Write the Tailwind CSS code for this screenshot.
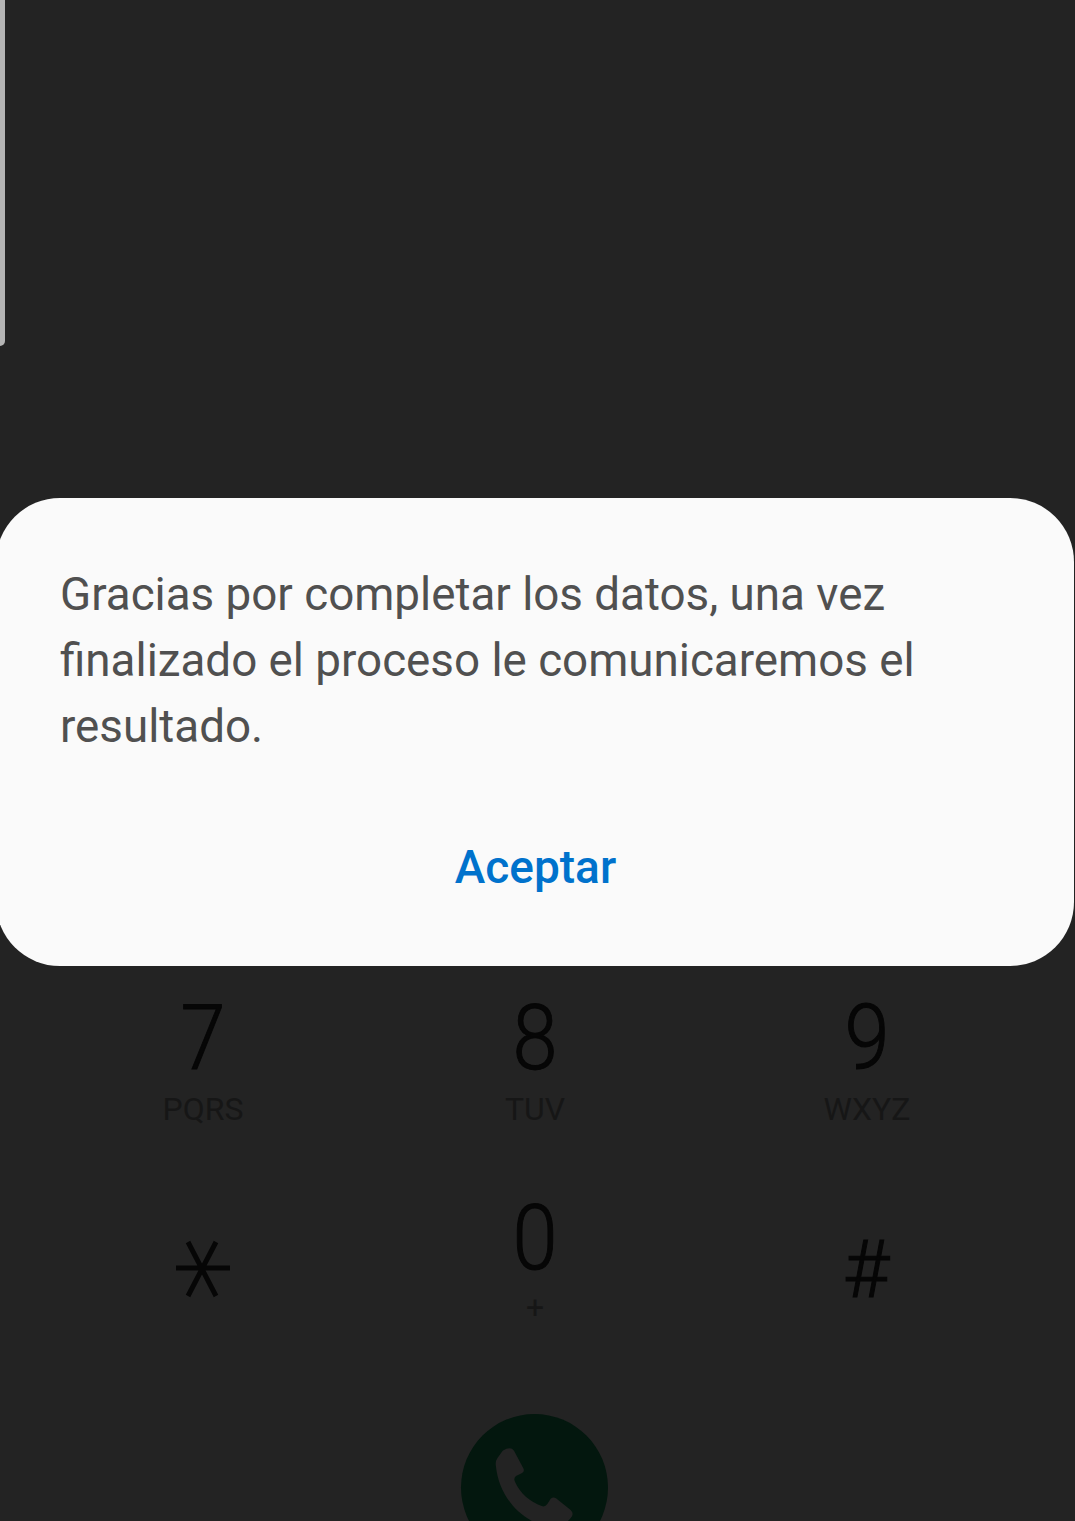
<!DOCTYPE html>
<html lang="es">
<head>
    <meta charset="UTF-8">
    <meta name="viewport" content="width=device-width, initial-scale=1.0">
    <title>Teléfono</title>
    <script src="https://cdn.jsdelivr.net/npm/@tailwindcss/browser@4"></script>
</head>
<body class="bg-[#232323] font-['Roboto',sans-serif] overflow-hidden">
    <div class="relative h-[1521px] w-[1075px] overflow-hidden">
        <!-- scrollbar -->
        <div class="absolute left-0 top-0 h-[346px] w-[5px] rounded-br-[6px] bg-[#b4b4b4]"></div>

        <div class="h-[498px]"></div>

        <!-- dialog -->
        <div class="-ml-[4px] h-[468px] w-[1078px] rounded-[64px] bg-[#fafafa] pl-[64px] pt-[64px]">
            <p class="w-[900px] text-[45.75px] leading-[66px] text-[#505050]">Gracias por completar los datos, una vez finalizado el proceso le comunicaremos el resultado.</p>
            <div class="-ml-[60px] mt-[74px] pr-[3px] text-center text-[46px] leading-[66px] font-medium text-[#0072cc]">Aceptar</div>
        </div>

        <!-- keypad behind the dim layer -->
        <div class="grid grid-cols-[repeat(3,332px)] pl-[37px] text-center text-[#060606]">
            <div class="pt-[28px]">
                <div class="scale-x-[.9] text-[90px] leading-[90px] font-light [-webkit-text-stroke:1px_#060606]">7</div>
                <div class="mt-[7px] text-[32px] leading-[36px] text-[#161616]">PQRS</div>
            </div>
            <div class="pt-[28px]">
                <div class="scale-x-[.9] text-[90px] leading-[90px] font-light [-webkit-text-stroke:1px_#060606]">8</div>
                <div class="mt-[7px] text-[32px] leading-[36px] text-[#161616]">TUV</div>
            </div>
            <div class="pt-[28px]">
                <div class="scale-x-[.9] text-[90px] leading-[90px] font-light [-webkit-text-stroke:1px_#060606]">9</div>
                <div class="mt-[7px] text-[32px] leading-[36px] text-[#161616]">WXYZ</div>
            </div>

            <div class="flex items-start justify-center pt-[113px]">
                <svg class="h-[58px] w-[56px]" viewBox="0 0 56 58" fill="none" stroke="#060606" stroke-width="5">
                    <path d="M1 28h54M13 2l28 54M41 2 13 56"/>
                </svg>
            </div>
            <div class="pt-[67px]">
                <div class="scale-x-[.9] text-[90px] leading-[90px] font-light [-webkit-text-stroke:1px_#060606]">0</div>
                <div class="mt-[5px] text-[32px] leading-[36px] text-[#161616]">+</div>
            </div>
            <div class="-ml-[2px] pt-[103px] text-[80px] leading-[80px] font-light [-webkit-text-stroke:1px_#060606]">#</div>
        </div>

        <!-- call button -->
        <div class="relative ml-[461px] mt-[89px] h-[147px] w-[147px] rounded-full bg-[#03170e]">
            <svg class="absolute left-[-21px] top-[-14px] h-[121px] w-[190px]" viewBox="0 0 570 363" fill="#232323">
                <path d="M188 152 172 175Q165 185 168 200C175 270 220 340 290 370L350 385C370 375 385 365 395 350Q402 340 392 330L348 295Q340 290 332 296L322 312Q315 322 305 318C270 305 240 280 225 245Q220 235 228 228L245 220Q255 215 250 205L222 152Q212 138 188 152Z"/>
            </svg>
        </div>
    </div>
</body>
</html>
